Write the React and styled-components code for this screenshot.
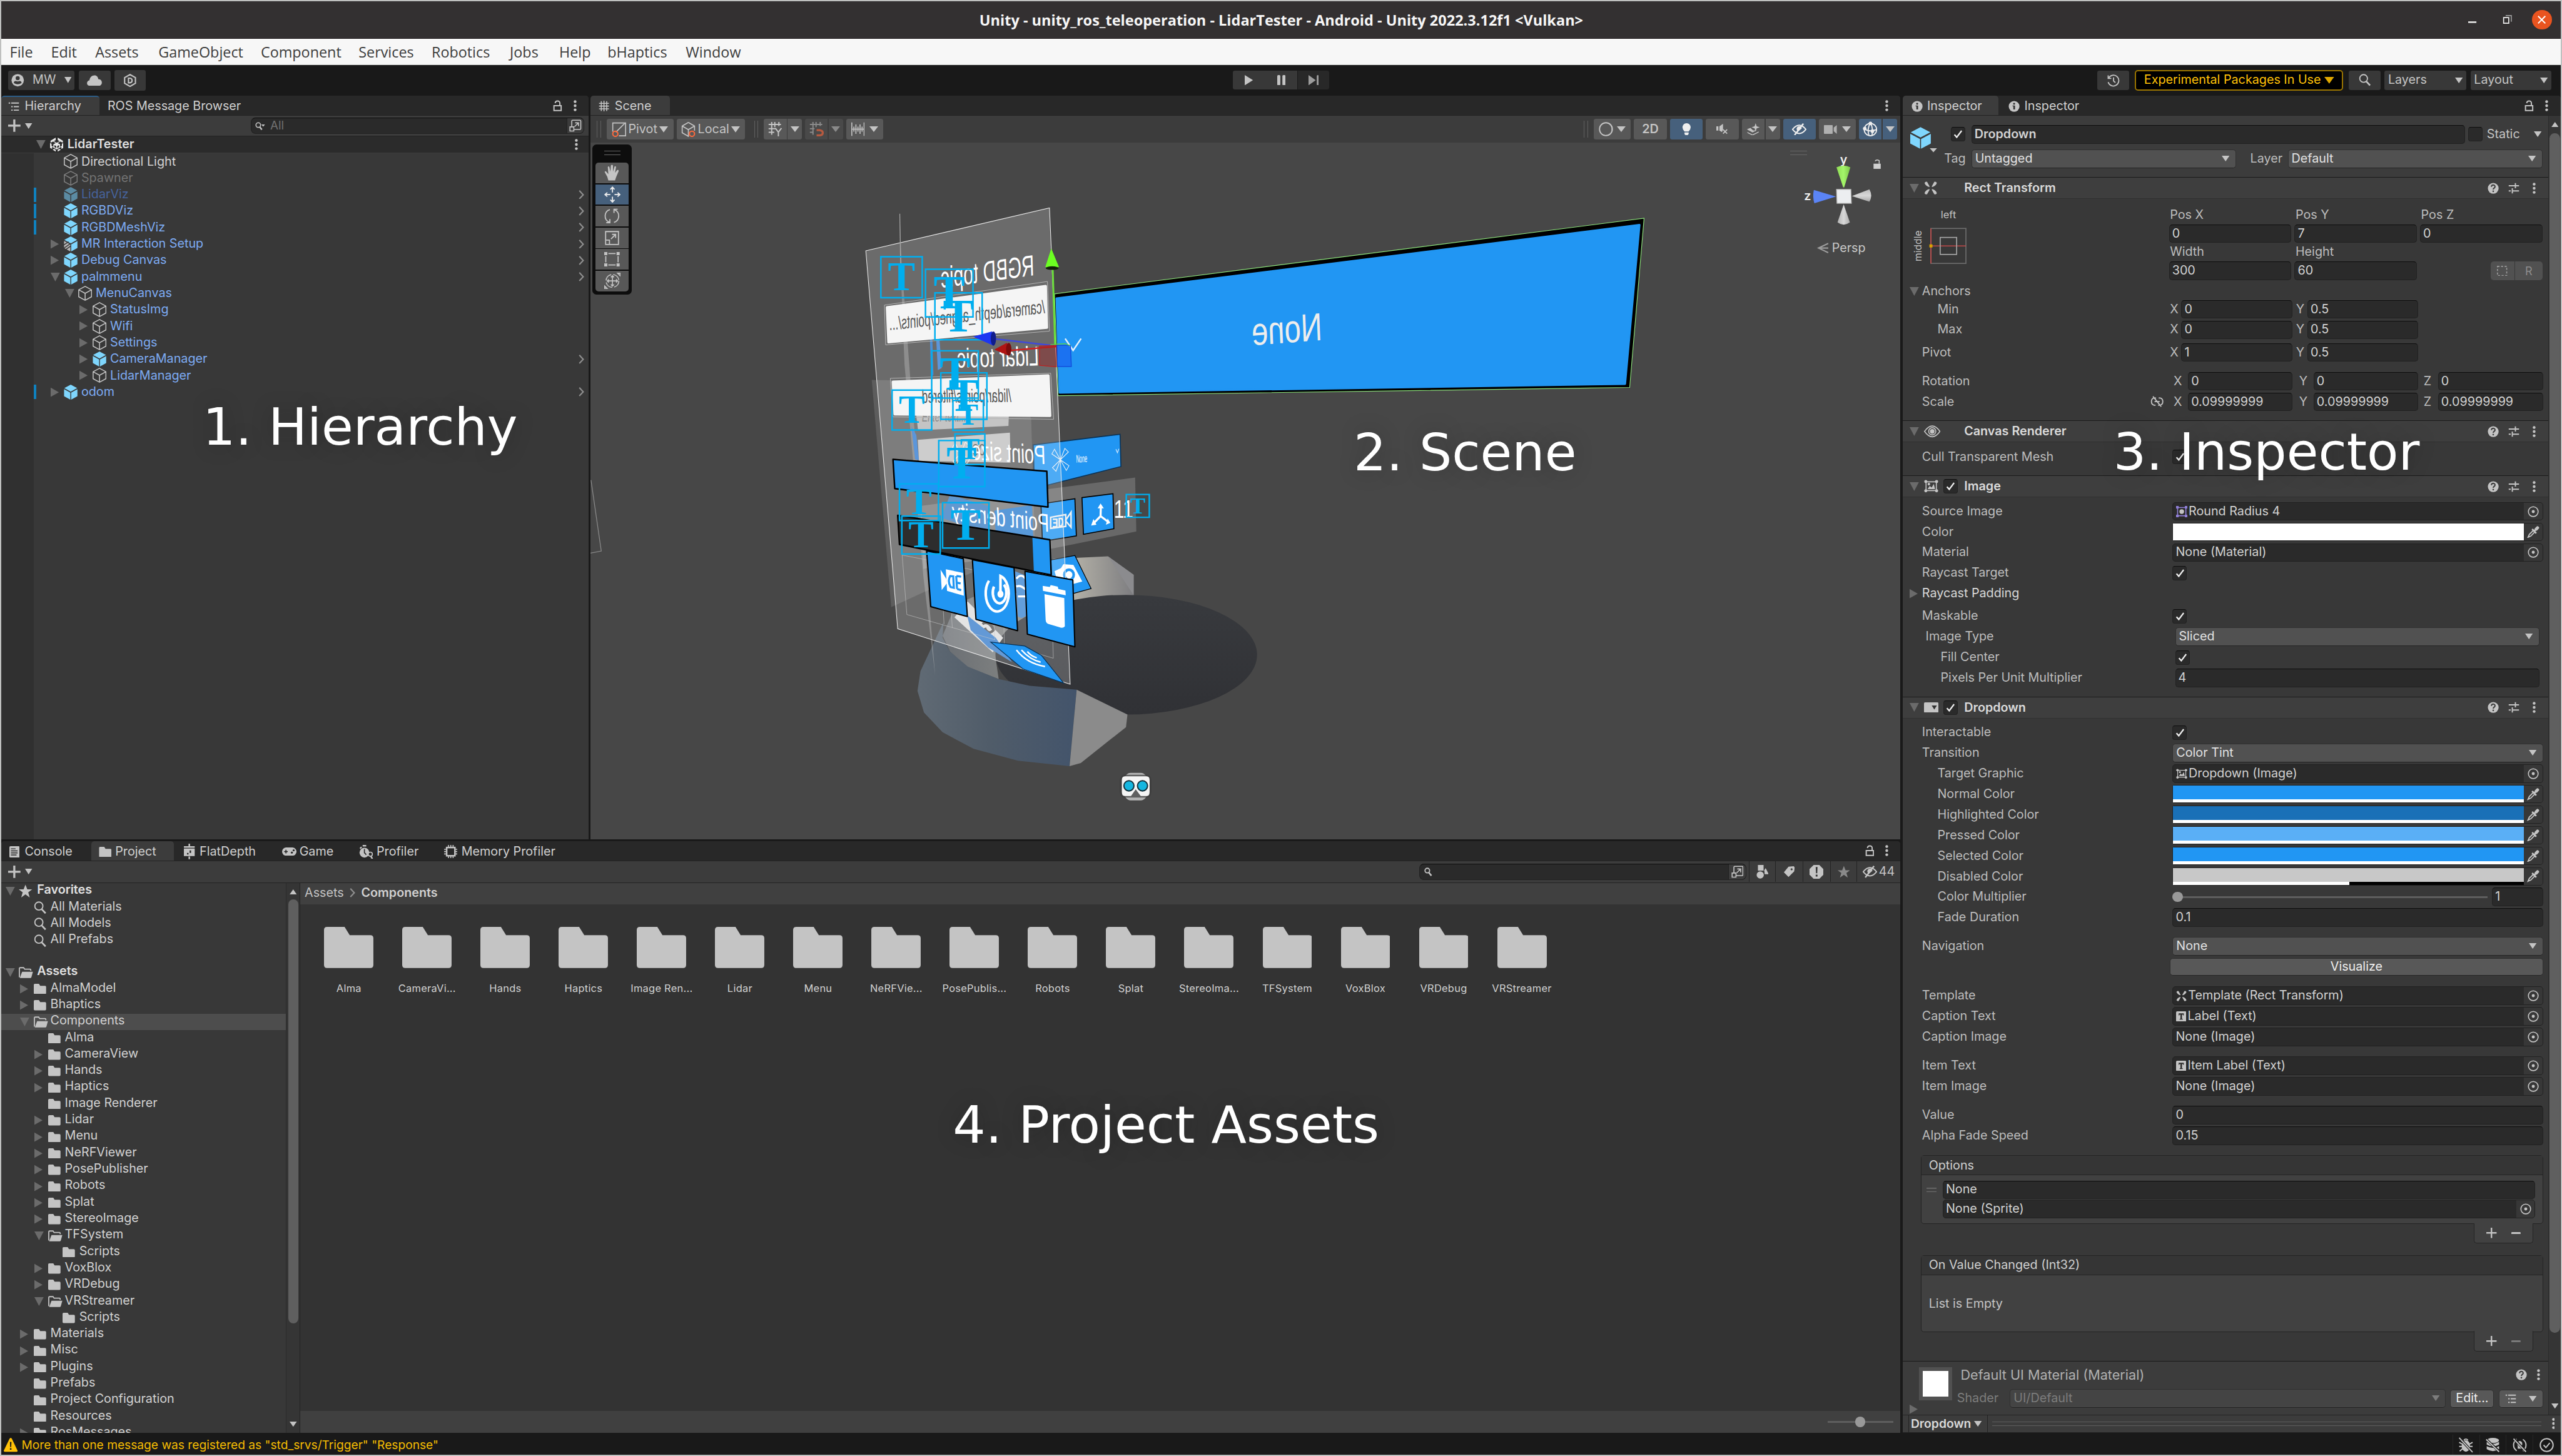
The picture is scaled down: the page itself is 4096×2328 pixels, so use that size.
import React from "react";
import styled, { createGlobalStyle, css } from "styled-components";

const FG = "#c4c4c4";

const GlobalStyle = createGlobalStyle`
  html, body { margin: 0; padding: 0; background: #191919; overflow: hidden; }
  * { box-sizing: border-box; }
`;

/* ---------- window frame ---------- */

const Desktop = styled.div`
  width: 4980px;
  height: 2830px;
  zoom: 0.8225;
  padding: 3px 2px 2px 3px;
  background: #bfc0bf;
  position: relative;
  overflow: hidden;
`;
const Window = styled.div`
  width: 4975px;
  height: 2825px;
  display: flex;
  flex-direction: column;
  overflow: hidden;
  background: #191919;
  font-family: Inter, "Liberation Sans", sans-serif;
  font-size: 24px;
  line-height: 1;
  color: ${FG};
  white-space: nowrap;
`;
const TitleBar = styled.div`
  flex: 0 0 73px;
  background: #333031;
  border-bottom: 2px solid #1f1b1d;
  display: flex;
  align-items: center;
  justify-content: center;
  position: relative;
`;
const Title = styled.div`
  font: bold 28.6px "Open Sans", "Noto Sans", sans-serif;
  color: #f6f6f6;
`;
const WindowButtons = styled.div`
  position: absolute;
  right: 18px;
  top: 0;
  height: 71px;
  display: flex;
  align-items: center;
  gap: 39px;
`;
const MinimizeSlot = styled.div`
  margin-right: 12px;
`;
const CloseButton = styled.div`
  width: 38px;
  height: 38px;
  border-radius: 50%;
  background: #e95420;
  display: grid;
  place-items: center;
`;
const MenuBar = styled.div`
  flex: 0 0 50px;
  background: #f7f7f7;
  border-bottom: 2px solid #dcdedc;
  display: flex;
  align-items: center;
  padding-left: 16px;
`;
const MenuItem = styled.div`
  width: ${(p) => p.$w}px;
  font: 28.4px "Open Sans", "Noto Sans", sans-serif;
  color: #3d3d3d;
`;
const AppToolbar = styled.div`
  flex: 0 0 60px;
  display: flex;
  align-items: center;
  padding: 0 0 0 13px;
`;
const ToolButton = styled.div`
  width: ${(p) => p.$w}px;
  height: ${(p) => p.$h || 38}px;
  margin-left: ${(p) => p.$ml || 0}px;
  padding: 0 ${(p) => p.$px || 0}px;
  background: ${(p) => p.$bg || "#383838"};
  border-radius: ${(p) => p.$r || "4px"};
  display: flex;
  align-items: center;
  justify-content: ${(p) => p.$justify || "center"};
  gap: ${(p) => p.$gap || 0}px;
  font-weight: ${(p) => (p.$bold ? 600 : 400)};
  flex: none;
`;
const ExperimentalButton = styled(ToolButton)`
  border: 3px solid #9a7400;
  background: #000;
  color: #ffc107;
  border-radius: 6px;
`;
const Main = styled.div`
  flex: 0 0 2598px;
  display: flex;
  gap: 4px;
`;
const LeftColumn = styled.div`
  flex: 0 0 3691px;
  display: flex;
  flex-direction: column;
  gap: 4px;
`;
const TopPanels = styled.div`
  flex: 0 0 1444px;
  display: flex;
  gap: 4px;
`;
const Panel = styled.section`
  flex: 0 0 ${(p) => p.$size}px;
  background: #383838;
  border-radius: 6px 6px 0 0;
  overflow: hidden;
  display: flex;
  flex-direction: column;
`;

/* ---------- tabs ---------- */

const TabBar = styled.div`
  flex: 0 0 38px;
  background: #282828;
  border-bottom: 2px solid #232323;
  display: flex;
`;
const Tab = styled.div`
  flex: 0 0 ${(p) => p.$w}px;
  height: 38px;
  padding: 3px 0 0 ${(p) => p.$pl}px;
  display: flex;
  align-items: center;
  gap: ${(p) => p.$gap || 0}px;
  color: #d0d0d0;
  ${(p) => p.$active && css`background: #3c3c3c; border-radius: 6px 6px 0 0;`}
  ${(p) => p.$focus && css`border-top: 3px solid #2c5d87; padding-top: 1px;`}
`;
const TabTools = styled.div`
  margin-left: auto;
  padding-right: ${(p) => p.$pr}px;
  display: flex;
  align-items: center;
  gap: ${(p) => p.$gap || 20}px;
`;
const PanelToolbar = styled.div`
  flex: 0 0 ${(p) => p.$h}px;
  background: #3c3c3c;
  border-bottom: ${(p) => (p.$plain ? "none" : "2px solid #232323")};
  display: flex;
  align-items: center;
  padding-left: ${(p) => p.$pl || 0}px;
`;
const SearchField = styled.div`
  width: ${(p) => p.$w}px;
  height: 32px;
  padding-left: 8px;
  background: #2a2a2a;
  border: 2px solid #212121;
  border-top-color: #0d0d0d;
  border-radius: 9px;
  overflow: hidden;
  display: flex;
  align-items: center;
  gap: 10px;
  color: #707070;
  font-size: 23px;
`;
const SearchOpen = styled.div`
  margin-left: auto;
  width: 33px;
  height: 100%;
  background: #3c3c3c;
  border-left: 2px solid #212121;
  display: grid;
  place-items: center;
`;

/* ---------- trees ---------- */

const HierarchyBody = styled.div`
  flex: 1;
  background: linear-gradient(to right, #303030 63px, #383838 63px);
`;
const SceneRow = styled.div`
  height: 33px;
  display: flex;
  align-items: center;
  background: #2b2b2b;
  border-bottom: 2px solid #3c3c3c;
  padding: 0 21px 0 68px;
  font-weight: 600;
  color: #dedede;
`;
const TreeRow = styled.div`
  height: 32px;
  display: flex;
  align-items: center;
  padding-left: ${(p) => p.$pl}px;
  font-weight: ${(p) => (p.$bold ? 600 : 400)};
  color: ${(p) => p.$color || "#d2d2d2"};
  background: ${(p) => (p.$selected ? "#4d4d4d" : "transparent")};
`;
const Marker = styled.div`
  width: 5px;
  height: 28px;
  margin-left: 63px;
  background: ${(p) => (p.$on ? "#0f81be" : "transparent")};
`;
const Slot = styled.div`
  flex: 0 0 ${(p) => p.$w}px;
  padding-left: ${(p) => p.$pl || 0}px;
  display: flex;
  align-items: center;
`;
const TopSlot = styled(Slot)`
  align-items: flex-start;
  padding-top: ${(p) => p.$pt || 0}px;
`;
const Grow = styled.div`flex: 1;`;
const RowText = styled.div`padding-bottom: ${(p) => p.$pb || 0}px;`;

/* ---------- scene ---------- */

const SceneBody = styled.div`
  flex: 1;
  position: relative;
  background: #474747;
`;
const Grip = styled.div`
  width: 8px;
  height: 32px;
  margin-left: ${(p) => p.$ml}px;
  border: solid #606060;
  border-width: 0 2px;
`;
const HGrip = styled.div`
  width: 32px;
  height: 8px;
  border: solid #666;
  border-width: 2px 0;
`;
const SceneButton = styled(ToolButton)`
  height: 40px;
  background: ${(p) => (p.$on ? "#46607c" : p.$dim ? "#494949" : "#585858")};
`;
const Palette = styled.div`
  position: absolute;
  left: 4px;
  top: 4px;
  width: 76px;
  height: 291px;
  padding-top: 12px;
  background: #0d0d0d;
  border-radius: 8px;
  display: flex;
  flex-direction: column;
  align-items: center;
  gap: 2px;
`;
const PaletteButton = styled.div`
  width: 64px;
  height: 40px;
  margin-top: ${(p) => (p.$first ? 13 : 0)}px;
  background: ${(p) => (p.$on ? "#46607c" : "#585858")};
  border-radius: ${(p) => (p.$first ? "6px 6px 0 0" : p.$last ? "0 0 6px 6px" : 0)};
  display: grid;
  place-items: center;
`;
const OverlayGrip = styled.div`
  position: absolute;
  left: 2332px;
  top: 16px;
`;
const Annotation = styled.div`
  position: absolute;
  left: ${(p) => p.$x}px;
  top: ${(p) => p.$y}px;
  font: 100.3px "DejaVu Sans", sans-serif;
  line-height: 100px;
  white-space: nowrap;
  color: #fff;
  text-shadow: 0 0 40px rgba(20, 20, 20, 0.25);
`;

/* ---------- project ---------- */

const ProjectBody = styled.div`
  flex: 1;
  display: flex;
  min-height: 0;
`;
const ProjectTree = styled.div`
  flex: 0 0 553px;
  overflow: hidden;
`;
const TreeGap = styled.div`
  height: 30px;
`;
const ScrollTrack = styled.div`
  flex: 0 0 ${(p) => p.$w}px;
  background: #353535;
  border: solid #2b2b2b;
  border-width: 0 0 0 1px;
  display: flex;
  flex-direction: column;
  align-items: center;
  padding: 12px 0;
`;
const ScrollThumb = styled.div`
  width: 20px;
  height: ${(p) => p.$h}px;
  margin-top: ${(p) => p.$mt}px;
  border-radius: 10px;
  background: #5f5f5f;
`;
const ProjectContent = styled.div`
  flex: 1;
  border-left: 2px solid #232323;
  background: #333333;
  display: flex;
  flex-direction: column;
`;
const Breadcrumb = styled.div`
  flex: 0 0 42px;
  background: #404040;
  display: flex;
  align-items: center;
  padding: 0 0 3px 8px;
`;
const Crumb = styled.div`
  font-weight: 600;
  color: #d0d0d0;
`;
const FolderGrid = styled.div`
  flex: 1;
  display: flex;
  align-items: flex-start;
  padding: 44px 0 0 18px;
`;
const FolderTile = styled.div`
  flex: 0 0 152px;
  display: flex;
  flex-direction: column;
  align-items: center;
  gap: 29px;
  font-size: 20px;
  letter-spacing: 0.3px;
  color: #d2d2d2;
`;
const ProjectFooter = styled.div`
  flex: 0 0 42px;
  background: #404040;
  display: flex;
  justify-content: flex-end;
  align-items: center;
  padding-right: 14px;
`;
const ZoomTrack = styled.div`
  width: 127px;
  height: 4px;
  background: #5e5e5e;
  display: flex;
  align-items: center;
  padding-left: 53px;
`;
const Knob = styled.div`
  flex: none;
  width: 20px;
  height: 20px;
  border-radius: 50%;
  background: #999;
`;
const FilterCell = styled.div`
  width: ${(p) => p.$w}px;
  height: 40px;
  border-left: 2px solid #232323;
  display: flex;
  align-items: center;
  justify-content: center;
  gap: 3px;
`;
const StatusBar = styled.div`
  flex: 0 0 44px;
  display: flex;
  align-items: center;
  padding: 4px 3px 0 4px;
  color: #f4bc02;
  font-size: 23.3px;
`;
const StatusCell = styled.div`
  width: 52px;
  height: 40px;
  border-left: 2px solid #262626;
  display: grid;
  place-items: center;
`;

/* ---------- inspector ---------- */

const InspectorScroll = styled.div`
  flex: 0 0 2517px;
  display: flex;
`;
const InspectorContent = styled.div`
  flex: 0 0 1255px;
  display: flex;
  flex-direction: column;
  overflow: hidden;
`;
const ObjectHeader = styled.div`
  flex: 0 0 119px;
  background: #3c3c3c;
  display: flex;
  padding: 18px 0 0 15px;
`;
const ObjectLines = styled.div`
  display: flex;
  flex-direction: column;
  gap: 12px;
`;
const HeaderLine = styled.div`
  display: flex;
  align-items: center;
  height: 36px;
  margin-left: ${(p) => p.$ml || 0}px;
`;
const ComponentHeader = styled.div`
  flex: 0 0 43px;
  background: #3e3e3e;
  border-top: 2px solid #1a1a1a;
  border-bottom: 2px solid #303030;
  display: flex;
  align-items: center;
  padding-left: 14px;
`;
const ComponentTitle = styled.div`
  font-weight: 600;
  color: #dadada;
  flex: 1;
  padding-top: 1px;
`;
const HeaderTools = styled.div`
  display: flex;
  align-items: center;
  width: 118px;
`;
const Row = styled.div`
  flex: 0 0 ${(p) => p.$h || 40}px;
  display: flex;
  align-items: center;
`;
const Label = styled.div`
  flex: 0 0 ${(p) => 525 - (p.$short || 0)}px;
  padding: ${(p) => p.$pt || 0}px 0 0 ${(p) => p.$pl || 38}px;
  color: ${(p) => (p.$bright ? "#d8d8d8" : "#bdbdbd")};
  display: flex;
  align-items: center;
`;
const fieldBox = css`
  background: #2a2a2a;
  border: 2px solid #212121;
  border-top-color: #0d0d0d;
  border-radius: 6px;
  color: #d2d2d2;
`;
const Field = styled.div`
  ${fieldBox}
  width: ${(p) => p.$w || 720}px;
  height: 36px;
  padding: 0 0 0 5px;
  margin-left: ${(p) => p.$ml || 0}px;
  display: flex;
  align-items: center;
  flex: none;
  font-weight: ${(p) => (p.$bold ? 600 : 400)};
`;
const ObjectField = styled(Field)`
  border-top-color: #212121;
  gap: 3px;
`;
const Picker = styled.div`
  margin-left: auto;
  width: 36px;
  height: 100%;
  background: #373737;
  border-radius: 0 5px 5px 0;
  display: grid;
  place-items: center;
`;
const Select = styled.div`
  width: ${(p) => p.$w || 720}px;
  height: 36px;
  margin-left: ${(p) => p.$ml || 0}px;
  padding: 0 ${(p) => p.$pr || 11}px 1px 6px;
  background: ${(p) => (p.$dim ? "#444" : "#515151")};
  border: 2px solid #303030;
  border-bottom-color: #242424;
  border-radius: 6px;
  display: flex;
  align-items: center;
  justify-content: space-between;
  color: ${(p) => (p.$dim ? "#7c7c7c" : "#e2e2e2")};
  flex: none;
`;
const CheckBox = styled.div`
  width: 28px;
  height: 28px;
  margin-left: ${(p) => p.$ml || 0}px;
  background: #2a2a2a;
  border: 2px solid #212121;
  border-top-color: #0d0d0d;
  border-radius: 5px;
  display: grid;
  place-items: center;
  flex: none;
`;
const ColorField = styled.div`
  width: 720px;
  height: 35px;
  border: 2px solid #212121;
  border-radius: 3px 6px 6px 3px;
  background: #373737;
  display: flex;
`;
const Swatch = styled.div`
  flex: 0 0 681px;
  display: flex;
  flex-direction: column;
  background: ${(p) => p.$c};
  justify-content: flex-end;
`;
const AlphaBar = styled.div`
  height: 6px;
  background: linear-gradient(to right, #fff ${(p) => p.$a}%, #000 ${(p) => p.$a}%);
`;
const Spacer = styled.div`
  flex: 0 0 ${(p) => p.$h}px;
`;
const RectBlock = styled.div`
  flex: 0 0 144px;
  display: flex;
`;
const AnchorPreview = styled.div`
  flex: 0 0 518px;
  padding: 6px 0 0 16px;
`;
const RectGrid = styled.div`
  display: grid;
  grid-template-columns: repeat(3, 238px);
  grid-auto-rows: 36px;
  column-gap: 6px;
  align-items: center;
`;
const RectLabel = styled.div`
  padding-left: 2px;
  color: #bdbdbd;
`;
const SmallButtons = styled.div`
  justify-self: end;
  display: flex;
  gap: 2px;
`;
const SmallButton = styled.div`
  width: ${(p) => p.$w}px;
  height: 37px;
  background: #515151;
  border-radius: ${(p) => p.$r};
  display: grid;
  place-items: center;
  color: #8c8c8c;
  font-size: 22px;
`;
const Axis = styled.div`
  width: ${(p) => p.$w}px;
  padding-left: ${(p) => p.$pl || 0}px;
  margin-left: ${(p) => p.$ml || 0}px;
  color: ${(p) => (p.$dim ? "#7c7c7c" : "#bdbdbd")};
  flex: none;
`;
const PushButton = styled.div`
  width: ${(p) => p.$w}px;
  height: 35px;
  margin-left: ${(p) => p.$ml || 0}px;
  background: #585858;
  border: 1px solid #303030;
  border-bottom: 2px solid #242424;
  border-radius: 6px;
  display: flex;
  align-items: center;
  justify-content: center;
  gap: 24px;
  color: #eee;
  flex: none;
`;
const SliderTrack = styled.div`
  width: 612px;
  height: 4px;
  background: #5e5e5e;
  display: flex;
  align-items: center;
`;
const ListBox = styled.div`
  flex: 0 0 ${(p) => p.$h}px;
  width: 1209px;
  margin-left: 36px;
  background: #414141;
  border: 2px solid #242424;
  border-radius: 6px;
`;
const ListHeader = styled.div`
  height: 38px;
  background: #353535;
  border-bottom: 2px solid #242424;
  padding: 1px 0 0 14px;
  display: flex;
  align-items: center;
  color: #d0d0d0;
`;
const ListBody = styled.div`
  padding: ${(p) => p.$pad};
  display: flex;
`;
const ListFields = styled.div`
  display: flex;
  flex-direction: column;
  gap: 1px;
`;
const ListFooter = styled.div`
  flex: 0 0 40px;
  width: 115px;
  margin: -2px 0 0 1111px;
  background: #414141;
  border: 2px solid #242424;
  border-top: none;
  border-radius: 0 0 6px 6px;
  display: flex;
  align-items: center;
  justify-content: center;
  gap: 29px;
`;
const MaterialHeader = styled.div`
  flex: 1;
  background: #3c3c3c;
  border-top: 2px solid #1a1a1a;
  display: flex;
  padding: 11px 0 0 14px;
`;
const BottomSlot = styled(Slot)`
  align-items: flex-end;
`;
const Thumb = styled.div`
  width: 64px;
  height: 64px;
  border: 8px solid #515151;
  background: #fff;
`;
const MaterialLines = styled.div`
  flex: 1;
  display: flex;
  flex-direction: column;
  padding-left: 10px;
`;
const MaterialTitle = styled.div`
  flex: 0 0 1086px;
  padding: 2px 0 0 7px;
  font-size: 26.3px;
  color: #b0b0b0;
`;
const PreviewBar = styled.div`
  flex: 1;
  background: #3c3c3c;
  border-top: 2px solid #232323;
  border-bottom: 2px solid #232323;
  display: flex;
  align-items: center;
`;
const PreviewName = styled.div`
  flex: 0 0 154px;
  height: 100%;
  margin-left: 12px;
  border: solid #232323;
  border-width: 0 2px;
  padding-left: 3px;
  display: flex;
  align-items: center;
  gap: 6px;
  font-weight: 600;
  font-size: 23.5px;
  color: #dadada;
`;
const PreviewRule = styled.div`
  flex: 0 0 1068px;
  height: 9px;
  margin-left: 8px;
  border: solid #5e5e5e;
  border-width: 2px 0;
`;

/* ---------- icons ---------- */

const IconSvg = styled.svg`
  display: block;
  flex: none;
`;
const Svg = ({ w, h, vb, children, s, f, sw = 2, ...rest }) => (
  <IconSvg width={w} height={h} viewBox={vb || `0 0 ${w} ${h}`} fill={f || "none"} stroke={s || "none"} strokeWidth={sw} {...rest}>
    {children}
  </IconSvg>
);
const Down = ({ c = FG, w = 16, h = 12 }) => (
  <Svg w={w} h={h} vb="0 0 16 12" f={c} preserveAspectRatio="none"><path d="M0 0H16L8 12Z" /></Svg>
);
const Up = () => (
  <Svg w={14} h={10} f={FG}><path d="M0 10L7 0L14 10Z" /></Svg>
);
const Right = ({ c = "#6b6b6b" }) => (
  <Svg w={16} h={20} f={c}><path d="M0 1V19L16 10Z" /></Svg>
);
const Fold = ({ c = "#6b6b6b" }) => (
  <Svg w={18} h={17} f={c}><path d="M0 0H18L9 17Z" /></Svg>
);
const Kebab = ({ c = FG }) => (
  <Svg w={6} h={22} f={c}><circle cx="3" cy="3" r="2.7" /><circle cx="3" cy="11" r="2.7" /><circle cx="3" cy="19" r="2.7" /></Svg>
);
const Lock = () => (
  <Svg w={18} h={22} s={FG} sw={2.4}><path d="M2 11H16V20.5H2ZM4.5 6C4.5 1 13.5 0 13.5 6V11" /></Svg>
);
const Cube = ({ c = FG, solid, hatch, w = 27 }) => (
  <Svg w={w} h={w * 1.08} vb="0 0 26 28" s={solid ? "none" : c} sw={1.8} strokeLinejoin="round">
    {solid ? (
      <g fill={c}>
        <path d="M13 0L25 6.5L13 13L1 6.5Z" />
        <path d="M0.5 8.5L12.2 15V28L0.5 21.5Z" fill={hatch ? "#b8b8b8" : c} />
        <path d="M25.5 8.5L13.8 15V28L25.5 21.5Z" />
        {hatch && <path d="M0 16L9 10M0 22L13 13M3 25L13 18" stroke="#383838" strokeWidth="1.8" />}
      </g>
    ) : (
      <path d="M13 1L25 7.5V20.5L13 27L1 20.5V7.5ZM1.5 7.8L13 14L24.5 7.8M13 14V27" />
    )}
  </Svg>
);
const UnityLogo = () => (
  <Svg w={26} h={28} vb="0 0 26 28" f="#e8e8e8">
    <path fillRule="evenodd" d="M11 0L1 6V10L6 7.5L11 10.5L6.5 13V18L3 16V12L0 10.5V20L4 22L4 18L13 23L22 18V22L26 20V10.5L23 12V16L19.5 18V13L15 10.5L20 7.5L25 10V6L15 0V5L18.5 7L13 10L7.5 7L11 5ZM8.5 14.5L12 16.5V20.5L8.5 18.5ZM17.5 14.5L14 16.5V20.5L17.5 18.5Z" />
    <path d="M5 23.5L11 27.5V24L13 25L15 24V27.5L21 23.5L18 22L13 24.8L8 22Z" />
  </Svg>
);
const Folder = ({ w = 24, h = 20 }) => (
  <Svg w={w} h={h} vb="0 0 24 20" f={FG}>
    <path d="M2 0H10L12.5 4H22Q24 4 24 6V18Q24 20 22 20H2Q0 20 0 18V2Q0 0 2 0Z" />
  </Svg>
);
const BigFolder = () => (
  <Svg w={96} h={80} f={FG}>
    <path d="M6 0H40L50 16H90Q96 16 96 22V74Q96 80 90 80H6Q0 80 0 74V6Q0 0 6 0Z" />
  </Svg>
);
const FolderOpen = () => (
  <Svg w={28} h={22} vb="0 0 28 22">
    <path d="M1.2 20V3Q1.2 1.5 3 1.5H9.5L11.5 4.5H22Q23.5 4.5 23.5 7.5" stroke={FG} strokeWidth="2.2" fill="none" />
    <path d="M2 21.5L6.5 9.5H27.5L24.5 20.5Q24 21.5 23 21.5Z" fill={FG} />
  </Svg>
);
const Star = ({ w = 26, c = FG }) => (
  <Svg w={w} h={w} vb="0 0 24 24" f={c}>
    <path d="M12 0.5L15.3 9H24L17 14.2L19.6 23.5L12 18L4.4 23.5L7 14.2L0 9H8.7Z" />
  </Svg>
);
const Search = ({ w = 26 }) => (
  <Svg w={w} h={w} vb="0 0 24 24" s={FG} sw={2.2}><circle cx="9.5" cy="9" r="7.5" /><path d="M15 15L22 22.5" strokeWidth="3.2" /></Svg>
);
const OpenWindow = ({ w = 24, c = FG }) => (
  <Svg w={w} h={w} vb="0 0 24 24" s={c} sw={2}>
    <path d="M5 14V3Q5 1.5 6.5 1.5H21Q22.5 1.5 22.5 3V18Q22.5 19.5 21 19.5H10M1.5 14.5H9V22.5H1.5ZM10.5 14L17.5 7M11.5 6.5H18V13" />
  </Svg>
);
const Plus = ({ w = 24, sw = 4 }) => (
  <Svg w={w} h={w} vb="0 0 24 24" s={FG} sw={sw}><path d="M12 0V24M0 12H24" /></Svg>
);
const Tick = ({ c = "#eee" }) => (
  <Svg w={18} h={18} s={c} sw={2.8}><path d="M2 10L6.5 15L16 2.5" /></Svg>
);
const Chevron = ({ c = "#8f8f8f" }) => (
  <Svg w={11} h={18} s={c} sw={2.6}><path d="M1.5 1L9 9L1.5 17" /></Svg>
);
const HierarchyIcon = () => (
  <Svg w={22} h={18} s={FG} sw={2.4}><path d="M1 2H4M6 2H21M6 9H9M11 9H21M6 16H9M11 16H21" /></Svg>
);
const InfoDot = () => (
  <Svg w={22} h={22} f={FG}><circle cx="11" cy="11" r="10.5" /><circle cx="11" cy="5.8" r="2" fill="#333" /><path d="M8 9.5H12.8V17H9.5V11H8Z" fill="#333" /></Svg>
);
const HelpDot = () => (
  <Svg w={22} h={22} f={FG}>
    <circle cx="11" cy="11" r="10.5" />
    <path d="M7.5 8.2C7.5 3.5 14.5 3.5 14.5 8C14.5 10.5 11 10.5 11 13.5" stroke="#3e3e3e" strokeWidth="2.5" fill="none" />
    <circle cx="11" cy="16.8" r="1.6" fill="#3e3e3e" />
  </Svg>
);
const Sliders = () => (
  <Svg w={22} h={22} s={FG} sw={2.4}><path d="M1 6H13M15 6H21M14 1V11M1 16H5M8 16H21M8 11V21" /></Svg>
);
const Target = () => (
  <Svg w={22} h={22} s={FG} sw={2}><circle cx="11" cy="11" r="9.5" /><circle cx="11" cy="11" r="3" fill={FG} stroke="none" /></Svg>
);
const Dropper = () => (
  <Svg w={24} h={24} s={FG} sw={2.2}>
    <path d="M12.5 8.5L4.5 16.5L2 22L7.5 19.5L15.5 11.5" />
    <path d="M11 7L17 13M14 10L20.5 3.5" strokeWidth="3.5" strokeLinecap="round" />
    <path d="M18 6L20.5 3.5" strokeWidth="6" strokeLinecap="round" />
  </Svg>
);
const GridIcon = ({ c = FG, w = 24 }) => (
  <Svg w={w} h={w} vb="0 0 24 24" s={c} sw={2.2}><path d="M6 1V23M12 0V24M18 1V23M1 6H23M1 12H23M1 18H23" /></Svg>
);
const RectIcon = ({ w = 26 }) => (
  <Svg w={w} h={w} vb="0 0 26 26" f={FG}>
    <path d="M1 3Q3 0 6 1L11 10L10 11Q3 9 1 3ZM25 3Q23 0 20 1L15 10L16 11Q23 9 25 3ZM1 23Q3 26 6 25L11 16L10 15Q3 17 1 23ZM25 23Q23 26 20 25L15 16L16 15Q23 17 25 23Z" />
  </Svg>
);
const ImageIcon = ({ w = 28, c = FG }) => (
  <Svg w={w} h={w * 0.9} vb="0 0 28 25" s={c} sw={2}>
    <path d="M4 4H24V21H4Z" />
    <path d="M7 18L11 12L15 15L19 8L21.5 18Z" fill={c} stroke="none" />
    <circle cx="9.5" cy="8.5" r="2.5" fill={c} stroke="none" />
    <g fill={c} stroke="none"><circle cx="3.5" cy="3.5" r="3" /><circle cx="24.5" cy="3.5" r="3" /><circle cx="3.5" cy="21.5" r="3" /><circle cx="24.5" cy="21.5" r="3" /></g>
  </Svg>
);
const SpriteIcon = () => (
  <Svg w={22} h={22} s="#8f7fd6" sw={2}>
    <path d="M3 3H19V19H3Z" /><circle cx="11" cy="11" r="4.5" fill={FG} stroke="none" />
    <g fill="#8f7fd6" stroke="none"><rect width="5" height="5" /><rect x="17" width="5" height="5" /><rect y="17" width="5" height="5" /><rect x="17" y="17" width="5" height="5" /></g>
  </Svg>
);
const TextIcon = () => (
  <Svg w={20} h={20} f={FG}><rect width="20" height="20" rx="2" /><path d="M5 4H15V8H13.5V6.5H11.5V14.5H13V16H7V14.5H8.5V6.5H6.5V8H5Z" fill="#2a2a2a" /></Svg>
);
const EyeIcon = () => (
  <Svg w={32} h={26} s={FG} sw={2}><path d="M1 13Q16 -8 31 13Q16 34 1 13Z" /><circle cx="16" cy="13" r="7" /><circle cx="16" cy="13" r="3.5" fill={FG} /></Svg>
);
const EyeOff = ({ c = "#eee" }) => (
  <Svg w={28} h={24} s={c} sw={2.4}><path d="M1 12Q14 -4 27 12Q14 28 1 12Z" /><path d="M9 12A5 5 0 0 1 19 10L11 17Z" fill={c} stroke="none" /><path d="M22 1L5 23" strokeWidth="3" /></Svg>
);
const UserIcon = () => (
  <Svg w={25} h={25} f={FG}><circle cx="12.5" cy="12.5" r="12" /><circle cx="12.5" cy="8.5" r="4" fill="#383838" /><path d="M5 18Q5 14 9 14Q12.5 16 16 14Q20 14 20 18Q12.5 23 5 18Z" fill="#383838" /></Svg>
);
const CloudIcon = () => (
  <Svg w={29} h={21} f={FG}><path d="M5 21C-2 20-1 11 5 10C6-1 21-3 22 8C31 8 31 20 24 21Z" /></Svg>
);
const HexIcon = () => (
  <Svg w={24} h={26} s={FG} sw={2.6}><path d="M12 1.5L22.5 7.5V18.5L12 24.5L1.5 18.5V7.5ZM9 8.5H12Q16 9 16 13Q16 17 12 17.5H9Z" /></Svg>
);
const HistoryIcon = () => (
  <Svg w={26} h={26} s={FG} sw={2.2}><path d="M4 8A10.5 10.5 0 1 1 3 16M3 3V9H9M13.5 7V14L17 17" /></Svg>
);
const ConsoleIcon = () => (
  <Svg w={20} h={22} f={FG}><rect width="20" height="22" rx="2" /><path d="M3 5H12M3 9H16M3 13H16M3 17H14" stroke="#282828" strokeWidth="1.8" /></Svg>
);
const DepthIcon = () => (
  <Svg w={21} h={30} f={FG}><path d="M0 5H21V8H0ZM0 9.5H21V24H0Z" /><path d="M9 0H12V5H9ZM9 25H12V30H9Z" /><path d="M6 18H9V21H6ZM11 13H14V18H11Z" fill="#282828" /></Svg>
);
const GameIcon = () => (
  <Svg w={28} h={16} f={FG}><rect width="28" height="16" rx="8" /><path d="M4 8H11M7.5 4.5V11.5" stroke="#282828" strokeWidth="2" /><circle cx="19" cy="10" r="2" fill="#282828" /><circle cx="22.5" cy="5.5" r="2" fill="#282828" /></Svg>
);
const ProfilerIcon = () => (
  <Svg w={28} h={27} f={FG}><circle cx="10.5" cy="15" r="9.5" /><path d="M7 0H14V3H7ZM1 6L4 3L6 5L3 8Z" /><path d="M10.5 8V15L14 19" stroke="#282828" strokeWidth="2" fill="none" /><circle cx="22" cy="18" r="4" stroke={FG} strokeWidth="2" fill="#282828" /><path d="M23 22L26 27" stroke={FG} strokeWidth="3" /></Svg>
);
const ChipIcon = () => (
  <Svg w={26} h={26} s={FG} sw={3}><rect x="5" y="5" width="16" height="16" /><path d="M8.5 0V5M13 0V5M17.5 0V5M8.5 21V26M13 21V26M17.5 21V26M0 8.5H5M0 13H5M0 17.5H5M21 8.5H26M21 13H26M21 17.5H26" strokeWidth="2" /></Svg>
);

/* ---------- data ---------- */

const MENU = [
  ["File", 80], ["Edit", 86], ["Assets", 123], ["GameObject", 199], ["Component", 190], ["Services", 142],
  ["Robotics", 152], ["Jobs", 96], ["Help", 94], ["bHaptics", 152], ["Window", 130],
];

const BLUE = "#7dabf3";
const HIERARCHY = [
  { name: "Directional Light", level: 1, color: "#d2d2d2" },
  { name: "Spawner", level: 1, color: "#737373", icon: "#7d7d7d" },
  { name: "LidarViz", level: 1, solid: true, mark: true, color: "#46639c", icon: "#5b8ba3", chev: true },
  { name: "RGBDViz", level: 1, solid: true, mark: true, chev: true },
  { name: "RGBDMeshViz", level: 1, solid: true, mark: true, chev: true },
  { name: "MR Interaction Setup", level: 1, solid: true, hatch: true, arrow: "r", chev: true },
  { name: "Debug Canvas", level: 1, solid: true, arrow: "r", chev: true },
  { name: "palmmenu", level: 1, solid: true, arrow: "d", chev: true },
  { name: "MenuCanvas", level: 2, arrow: "d" },
  { name: "StatusImg", level: 3, arrow: "r" },
  { name: "Wifi", level: 3, arrow: "r" },
  { name: "Settings", level: 3, arrow: "r" },
  { name: "CameraManager", level: 3, solid: true, arrow: "r", chev: true },
  { name: "LidarManager", level: 3, arrow: "r" },
  { name: "odom", level: 1, solid: true, mark: true, arrow: "r", chev: true },
];

const ASSETS = [
  ["AlmaModel", 1, "r"], ["Bhaptics", 1, "r"], ["Components", 1, "d"], ["Alma", 2], ["CameraView", 2, "r"],
  ["Hands", 2, "r"], ["Haptics", 2, "r"], ["Image Renderer", 2], ["Lidar", 2, "r"], ["Menu", 2, "r"],
  ["NeRFViewer", 2, "r"], ["PosePublisher", 2, "r"], ["Robots", 2, "r"], ["Splat", 2, "r"], ["StereoImage", 2, "r"],
  ["TFSystem", 2, "d"], ["Scripts", 3], ["VoxBlox", 2, "r"], ["VRDebug", 2, "r"], ["VRStreamer", 2, "d"],
  ["Scripts", 3], ["Materials", 1, "r"], ["Misc", 1, "r"], ["Plugins", 1, "r"], ["Prefabs", 1],
  ["Project Configuration", 1], ["Resources", 1], ["RosMessages", 1, "r"],
];

const FOLDERS = [
  "Alma", "CameraVi...", "Hands", "Haptics", "Image Ren...", "Lidar", "Menu", "NeRFVie...", "PosePublis...",
  "Robots", "Splat", "StereoIma...", "TFSystem", "VoxBlox", "VRDebug", "VRStreamer",
];

/* ---------- hierarchy ---------- */

const Arrow = ({ kind, c }) => (kind === "r" ? <Right c={c} /> : kind === "d" ? <Fold c={c} /> : null);

function Hierarchy() {
  return (
    <Panel $size={1141}>
      <TabBar>
        <Tab $w={190} $pl={13} $gap={10} $active $focus><HierarchyIcon />Hierarchy</Tab>
        <Tab $w={300} $pl={16}>ROS Message Browser</Tab>
        <TabTools $pr={23} $gap={22}><Lock /><Kebab /></TabTools>
      </TabBar>
      <PanelToolbar $h={40} $pl={13}>
        <Plus />
        <Slot $w={447} $pl={9}><Down w={14} h={11} /></Slot>
        <SearchField $w={649}>
          <Svg w={19} h={16} s={FG} sw={2}><circle cx="6" cy="6" r="4.5" /><path d="M9 10L13 15" strokeWidth="3" /><path d="M12 5H19L15.5 9Z" fill={FG} stroke="none" /></Svg>
          All
          <SearchOpen><OpenWindow /></SearchOpen>
        </SearchField>
      </PanelToolbar>
      <HierarchyBody>
        <SceneRow>
          <Slot $w={26}><Fold /></Slot>
          <Slot $w={34}><UnityLogo /></Slot>
          LidarTester
          <Grow />
          <Kebab />
        </SceneRow>
        {HIERARCHY.map((n) => (
          <TreeRow key={n.name} $pl={0} $color={n.color || BLUE}>
            <Marker $on={n.mark} />
            <Slot $w={28 * n.level} />
            <Slot $w={25}><Arrow kind={n.arrow} /></Slot>
            <Slot $w={34}>
              <Cube solid={n.solid} hatch={n.hatch} c={n.icon || (n.solid ? "#7fd6fd" : FG)} />
            </Slot>
            {n.name}
            <Grow />
            <Slot $w={19}>{n.chev && <Chevron />}</Slot>
          </TreeRow>
        ))}
      </HierarchyBody>
    </Panel>
  );
}

/* ---------- scene drawing ---------- */

const poly = (pts) => pts.map((p) => p.join(",")).join(" ");
const P = ({ pts, ...r }) => <polygon points={poly(pts)} vectorEffect="non-scaling-stroke" {...r} />;

const Mirrored = ({ x, y, x2, y2, size, fill = "#fff", opacity, children }) => {
  const len = x - x2;
  return (
    <text
      transform={`matrix(-1 ${(y2 - y) / len} 0.04 1 ${x} ${y})`}
      textLength={len}
      lengthAdjust="spacingAndGlyphs"
      fontFamily='"Liberation Sans", sans-serif'
      fontSize={size}
      fill={fill}
      opacity={opacity}
    >
      {children}
    </text>
  );
};

const TGizmo = ({ x, y, x2, y2 }) => {
  const w = x2 - x;
  const h = y2 - y;
  return (
    <g>
      <rect x={x} y={y} width={w} height={h} fill="none" stroke="#00aeef" strokeWidth="3" vectorEffect="non-scaling-stroke" />
      <text
        x={x + w * 0.17}
        y={y + h * 0.82}
        textLength={w * 0.66}
        lengthAdjust="spacingAndGlyphs"
        fontFamily='"Liberation Serif", serif'
        fontWeight="bold"
        fontSize={h}
        fill="#00aeef"
      >
        T
      </text>
    </g>
  );
};

const GIZMOS = [
  [196, 167, 336, 271], [347, 199, 508, 320], [379, 259, 539, 378], [368, 406, 526, 526], [399, 462, 555, 580],
  [440, 532, 543, 608], [234, 506, 368, 607], [447, 617, 548, 695], [392, 634, 548, 751], [259, 744, 391, 837],
  [405, 792, 562, 907], [267, 826, 397, 922], [1027, 771, 1105, 829],
];

const Pinwheel = ({ x, y }) => (
  <g transform={`translate(${x} ${y})`} fill="none" stroke="#f4f4f4" strokeWidth="1.3">
    {[0, 90, 180, 270].map((a) => (
      <path key={a} d="M0 0L15 -29L27 -20Z" transform={`rotate(${a})`} vectorEffect="non-scaling-stroke" />
    ))}
  </g>
);

const Drawing = styled.svg`
  display: block;
`;

function SceneDrawing() {
  return (
    <Drawing width="2546" height="1354" viewBox="1148 276 2546 1354">
      <defs>
        <linearGradient id="dome" x1="0" x2="1"><stop offset="0" stopColor="#606a74" /><stop offset="0.45" stopColor="#505c69" /><stop offset="1" stopColor="#43546b" /></linearGradient>
        <linearGradient id="disc" x1="0" y1="0" x2="0" y2="1"><stop offset="0" stopColor="#383a3e" /><stop offset="1" stopColor="#303135" /></linearGradient>
        <linearGradient id="rim" x1="0" x2="1"><stop offset="0" stopColor="#e9e4d2" /><stop offset="0.5" stopColor="#b9b6ab" /><stop offset="1" stopColor="#7d7d80" /></linearGradient>
        <linearGradient id="inner" x1="0" x2="1"><stop offset="0" stopColor="#6a6e73" /><stop offset="1" stopColor="#96968f" /></linearGradient>
        <linearGradient id="gcone" x1="0" x2="1"><stop offset="0" stopColor="#8fdc55" /><stop offset="0.5" stopColor="#a4f56a" /><stop offset="1" stopColor="#7cc749" /></linearGradient>
        <linearGradient id="scone" x1="0" x2="1"><stop offset="0" stopColor="#b4b4b4" /><stop offset="0.5" stopColor="#d8d8d8" /><stop offset="1" stopColor="#adadad" /></linearGradient>
        <linearGradient id="vcone" x1="0" y1="0" x2="0" y2="1"><stop offset="0" stopColor="#bcbcbc" /><stop offset="0.5" stopColor="#d8d8d8" /><stop offset="1" stopColor="#a5a5a5" /></linearGradient>
      </defs>
      <path d="M1149 932L1169 1070L1148 1074" fill="none" stroke="#8a8a8a" strokeWidth="1.5" />

      <g transform="translate(1600 370) scale(0.574 0.7653)">
        {/* pedestal */}
        <P pts={[[780, 935], [965, 928], [1052, 975], [1052, 1030], [840, 1060], [700, 1110], [600, 1060]]} fill="url(#rim)" />
        <P pts={[[965, 928], [1052, 975], [1052, 1027]]} fill="#8b8b8e" />
        <P pts={[[450, 1050], [560, 1015], [860, 1045], [700, 1090], [610, 1140], [585, 1190], [595, 1240], [490, 1210], [430, 1170], [405, 1130]]} fill="url(#inner)" />
        <ellipse cx="1027" cy="1178" rx="443" ry="152" fill="url(#disc)" />
        <P pts={[[408, 1095], [405, 1135], [430, 1170], [490, 1208], [595, 1240], [700, 1257], [859, 1267], [835, 1461], [660, 1447], [510, 1417], [405, 1375], [342, 1325], [320, 1270], [330, 1220]]} fill="url(#dome)" />
        <P pts={[[859, 1267], [1031, 1330], [1026, 1362], [873, 1453], [835, 1461]]} fill="#8b8b8b" />

        {/* panel behind */}
        <P pts={[[165, 480], [640, 486], [705, 578], [718, 905], [345, 1018], [231, 1057]]} fill="#fff" opacity="0.12" />
        <P pts={[[712, 645], [1006, 618], [1009, 700], [762, 747], [716, 750]]} fill="#2196f3" stroke="#0b3356" strokeWidth="2" />
        <P pts={[[330, 800], [1057, 728], [1061, 865], [780, 908], [340, 960]]} fill="#fff" opacity="0.18" />
        <P pts={[[430, 772], [560, 800], [560, 870], [400, 830]]} fill="#3b7fc4" />
        <P pts={[[580, 812], [708, 798], [712, 880], [585, 870]]} fill="#2f80d0" />
        <P pts={[[738, 795], [853, 782], [858, 876], [743, 890]]} fill="#2196f3" stroke="#000" strokeWidth="2" />
        <P pts={[[877, 779], [982, 769], [985, 858], [882, 872]]} fill="#2196f3" stroke="#000" strokeWidth="2" />
        <path d="M940 826L941 800M940 826L914 846M940 826L968 842" stroke="#fff" strokeWidth="4" vectorEffect="non-scaling-stroke" />
        <path d="M940 794L951 806H930ZM908 850L916 833L926 848ZM973 843L958 848L964 832Z" fill="#fff" />
        <text x="985" y="831" fontFamily='"Liberation Sans", sans-serif' fontSize="64" textLength="66" lengthAdjust="spacingAndGlyphs" fill="#fff">11</text>
        <text x="858" y="690" transform="rotate(-2 858 690)" fontFamily='"Liberation Sans", sans-serif' fontSize="28" textLength="37" lengthAdjust="spacingAndGlyphs" fill="#fff">None</text>
        <path d="M992 656L997 665L1002 655" fill="none" stroke="#cfe6fb" strokeWidth="1.5" vectorEffect="non-scaling-stroke" />
        <path d="M771 829L822 822V852L771 857Z" fill="none" stroke="#f0f0f0" strokeWidth="3" vectorEffect="non-scaling-stroke" />
        <path d="M778 834H792V853H778M780 843H792M800 832H808Q816 840 808 851H800ZM822 836L840 816V854L824 840Z" fill="none" stroke="#f0f0f0" strokeWidth="3" vectorEffect="non-scaling-stroke" />
        <P pts={[[740, 942], [853, 926], [908, 1010], [850, 1022], [790, 1030]]} fill="#2196f3" stroke="#000" strokeWidth="1.5" />
        <P pts={[[784, 966], [806, 958], [814, 948], [848, 950], [878, 992], [800, 1008]]} fill="#fff" />
        <ellipse cx="833" cy="975" rx="16" ry="13" fill="none" stroke="#2196f3" strokeWidth="5" vectorEffect="non-scaling-stroke" />
        <path d="M650 966L690 978V1078Q672 1090 660 1080Z" fill="#3c86d2" />
        <path d="M655 985Q670 970 686 985M655 1005Q668 1000 686 1012M660 1030H686" stroke="#fff" strokeWidth="4" fill="none" vectorEffect="non-scaling-stroke" />
        <P pts={[[445, 1083], [490, 1043], [610, 1135], [575, 1172]]} fill="#dedede" />
        <path d="M540 1100Q560 1090 578 1115Q560 1130 548 1110" fill="none" stroke="#555" strokeWidth="5" vectorEffect="non-scaling-stroke" />
        <P pts={[[488, 1078], [585, 1135], [640, 1197], [560, 1160], [500, 1115]]} fill="#3c80cc" />

        {/* menu canvas */}
        <P pts={[[145, 152], [767, 43], [837, 1253], [253, 1112]]} fill="#fff" fillOpacity="0.2" stroke="#e8e8e8" strokeWidth="1.3" />
        <P pts={[[260, 58], [266, 180], [300, 520], [352, 975], [380, 1232], [340, 980], [276, 440], [262, 180]]} fill="#cfcfcf" opacity="0.35" />
        <path d="M260 58L264 240" stroke="#a5a5a5" strokeWidth="1.5" fill="none" vectorEffect="non-scaling-stroke" />
        <path d="M268 925L398 944L410 1100M268 925L284 1076L582 1140L570 972L424 950L438 1110M608 950L614 1150L780 1187L772 990" stroke="#c8c8c8" strokeOpacity="0.6" strokeWidth="1.2" fill="none" vectorEffect="non-scaling-stroke" />
        <P pts={[[362, 372], [370, 372], [374, 466], [366, 478]]} fill="#4a8fd8" />
        <P pts={[[383, 372], [394, 372], [402, 450], [389, 455]]} fill="#5c96da" />
        <P pts={[[299, 598], [316, 620], [325, 684], [312, 682]]} fill="#5c96da" />
        <P pts={[[314, 560], [630, 560], [628, 597], [322, 608]]} fill="#c4c4c4" />
        <text x="335" y="585" fontFamily='"Liberation Sans", sans-serif' fontStyle="italic" fontSize="36" textLength="150" lengthAdjust="spacingAndGlyphs" fill="#8b8b8b">Enter text...</text>
        <P pts={[[321, 632], [633, 614], [635, 690], [325, 686]]} fill="#cdcdcd" />
        <text x="505" y="672" fontFamily='"Liberation Sans", sans-serif' fontSize="40" fill="#777">00</text>

        <P pts={[[208, 290], [760, 230], [767, 356], [212, 391]]} fill="none" stroke="#b5b5b5" strokeWidth="1.2" />
        <P pts={[[217, 296], [754, 242], [758, 347], [222, 384]]} fill="#f5f5f5" stroke="#f5f5f5" strokeWidth="5" strokeLinejoin="round" />
        <P pts={[[228, 476], [771, 463], [781, 580], [237, 574]]} fill="none" stroke="#b5b5b5" strokeWidth="1.2" />
        <P pts={[[237, 485], [763, 469], [769, 571], [243, 567]]} fill="#f5f5f5" stroke="#f5f5f5" strokeWidth="5" strokeLinejoin="round" />
        <Mirrored x={716} y={214} x2={400} y2={246} size={74}>RGBD topic</Mirrored>
        <Mirrored x={752} y={310} x2={225} y2={354} size={47} fill="#555">/camera/depth_aligned/points/...</Mirrored>
        <Mirrored x={732} y={443} x2={455} y2={449} size={69}>Lidar topic</Mirrored>
        <Mirrored x={638} y={536} x2={335} y2={538} size={47} fill="#555">/lidar/points/filtered</Mirrored>
        <Mirrored x={754} y={694} x2={504} y2={682} size={67}>Point size</Mirrored>
        <P pts={[[237, 682], [758, 712], [762, 803], [243, 756]]} fill="#2196f3" stroke="#000" strokeWidth="3" strokeLinejoin="round" />
        <Mirrored x={766} y={866} x2={437} y2={836} size={64}>Point density</Mirrored>
        <P pts={[[253, 824], [768, 886], [773, 975], [259, 898]]} fill="#2d2d2d" stroke="#000" strokeWidth="3" strokeLinejoin="round" />
        <P pts={[[709, 881], [766, 888], [770, 973], [714, 965]]} fill="#2196f3" />
        <P pts={[[351, 914], [475, 934], [489, 1081], [365, 1056]]} fill="#2196f3" stroke="#000" strokeWidth="2.5" strokeLinejoin="round" />
        <P pts={[[506, 937], [647, 957], [659, 1117], [518, 1088]]} fill="#2196f3" stroke="#000" strokeWidth="2.5" strokeLinejoin="round" />
        <P pts={[[684, 966], [846, 988], [853, 1158], [692, 1126]]} fill="#2196f3" stroke="#000" strokeWidth="2.5" strokeLinejoin="round" />
        <P pts={[[398, 962], [417, 985], [420, 996], [402, 1014]]} fill="#fff" />
        <P pts={[[416, 961], [474, 970], [477, 1028], [420, 1016]]} fill="#fff" />
        <path d="M468 980L452 978M468 1014L454 1011M466 997L454 995M451 978L454 1011M441 979L431 978Q421 990 432 1006L443 1008Z" fill="none" stroke="#2196f3" strokeWidth="4" vectorEffect="non-scaling-stroke" />
        <g fill="none" stroke="#fff" strokeWidth="5">
          <path d="M562 990A39 46 0 1 0 601 978V1022" vectorEffect="non-scaling-stroke" />
          <path d="M579 1005A23 27 0 1 0 613 1000" vectorEffect="non-scaling-stroke" />
          <circle cx="601" cy="1024" r="6" fill="#fff" vectorEffect="non-scaling-stroke" />
        </g>
        <P pts={[[744, 1003], [768, 1006], [771, 1001], [795, 1005], [797, 1011], [821, 1015], [822, 1027], [745, 1016]]} fill="#fff" />
        <path d="M750 1024L817 1034L819 1106Q812 1112 800 1108L764 1100Q755 1098 754 1090Z" fill="#fff" />
        <P pts={[[568, 1146], [683, 1156], [740, 1180], [815, 1250], [677, 1214]]} fill="#2196f3" stroke="#06335a" strokeWidth="1.5" />
        <path d="M655 1166Q690 1200 752 1208M672 1166Q700 1190 737 1197M692 1170Q705 1182 724 1186" fill="none" stroke="#fff" strokeWidth="3" vectorEffect="non-scaling-stroke" />
        <Pinwheel x={467} y={667} />
        <Pinwheel x={804} y={683} />
        {GIZMOS.map(([x, y, x2, y2]) => (
          <TGizmo key={`${x}-${y}`} x={x} y={y} x2={x2} y2={y2} />
        ))}
      </g>

      {/* large dropdown */}
      <P pts={[[2050, 570], [3196, 423], [3168, 752], [2057, 768]]} fill="#000" stroke="#8be07a" strokeWidth="1.4" />
      <P pts={[[2054, 579], [3187, 436], [3159, 745], [2060, 762]]} fill="#2196f3" stroke="#2196f3" strokeWidth="4" strokeLinejoin="round" />
      <Mirrored x={2571} y={660} x2={2434} y2={670} size={76} fill="#ededed">None</Mirrored>

      <g transform="translate(1600 370) scale(0.574 0.7653)">
        <path d="M820 375L847 405L874 375" fill="none" stroke="#e4f1fd" strokeWidth="3" vectorEffect="non-scaling-stroke" />
        <path d="M778 200L786 392" stroke="#6be03a" strokeWidth="3.5" vectorEffect="non-scaling-stroke" />
        <path d="M584 376L792 394" stroke="#3f49d8" strokeWidth="3" vectorEffect="non-scaling-stroke" />
        <path d="M636 405L792 395" stroke="#d11f1f" strokeWidth="3" vectorEffect="non-scaling-stroke" />
        <path d="M753 193L773 146L799 193Q776 204 753 193Z" fill="#6cff22" />
        <ellipse cx="776" cy="196" rx="22" ry="4.500" fill="#12200a" />
        <path d="M508 370L572 357Q590 374 578 393Z" fill="#1c36f2" />
        <ellipse cx="577" cy="375" rx="9" ry="18" fill="#101c8c" />
        <path d="M580 403L622 386Q642 402 630 419Z" fill="#b01414" />
        <ellipse cx="629" cy="402" rx="9" ry="16" fill="#7c0c0c" />
        <P pts={[[733, 394], [790, 392], [790, 447], [733, 443]]} fill="#9c1b1b" fillOpacity="0.4" stroke="#b22" strokeWidth="1.5" />
        <P pts={[[792, 392], [838, 392], [841, 446], [794, 446]]} fill="#1a62f0" fillOpacity="0.7" stroke="#1246d8" strokeWidth="1.5" />
        <path d="M770 390L820 388L838 393" fill="none" stroke="#5fd837" strokeWidth="1.5" vectorEffect="non-scaling-stroke" />

        {/* headset */}
        <rect x="1018" y="1478" width="82" height="70" rx="24" fill="#b5b5b5" />
        <rect x="1005" y="1483" width="107" height="58" rx="14" fill="#3c3c3c" opacity="0.7" />
        <path d="M1022 1487H1096Q1106 1487 1106 1497V1527Q1106 1537 1096 1537H1076L1059 1520L1043 1537H1022Q1012 1537 1012 1527V1497Q1012 1487 1022 1487Z" fill="#f5f5f5" />
        <ellipse cx="1036" cy="1511" rx="17" ry="13" fill="#14b6e0" stroke="#15323d" strokeWidth="2.5" vectorEffect="non-scaling-stroke" />
        <ellipse cx="1082" cy="1511" rx="17" ry="13" fill="#14b6e0" stroke="#15323d" strokeWidth="2.5" vectorEffect="non-scaling-stroke" />
      </g>

      {/* orientation gizmo */}
      <text x="3577" y="317" fontFamily="Inter, sans-serif" fontWeight="600" fontSize="24" fill="#f0f0f0">y</text>
      <text x="3507" y="388" fontFamily="Inter, sans-serif" fontWeight="600" fontSize="24" fill="#f0f0f0">z</text>
      <path d="M3570 324Q3584 318 3597 324L3585 363H3583Z" fill="url(#gcone)" />
      <path d="M3526 368Q3523 381 3527 394L3569 381Z" fill="#5b84f5" />
      <path d="M3600 380L3634 367Q3641 379 3634 391Z" fill="url(#vcone)" />
      <path d="M3584 396L3572 431Q3584 440 3596 431Z" fill="url(#scone)" />
      <path d="M3570 367H3598L3599 394H3571Z" fill="#eceef0" stroke="#b8b8b8" strokeWidth="1.5" />
      <path d="M3642 317H3656V327H3642Z" fill="#d0d0d0" />
      <path d="M3645 312Q3648 308 3653 311V317" fill="none" stroke="#d0d0d0" strokeWidth="1.8" />
      <path d="M3554 472L3535 481L3554 490M3537 481H3554" fill="none" stroke="#9c9c9c" strokeWidth="2.5" />
      <text x="3561" y="489" fontFamily="Inter, sans-serif" fontSize="24" fill="#c8c8c8">Persp</text>
    </Drawing>
  );
}

const PALETTE = [
  <Svg w={30} h={32} f={FG} key="hand"><path d="M8 31L6 24L1 15Q1 12 4 14L8 19L7 5Q8 2 10 5L12 14L13 2Q15 -1 17 2V14L20 4Q22 2 23 5L21 16L25 11Q28 9 28 13L23 25L21 31Z" /></Svg>,
  <Svg w={32} h={32} s="#eee" sw={2.2} key="move"><path d="M16 2V12M16 20V30M2 16H12M20 16H30M12 6L16 1.5L20 6M12 26L16 30.5L20 26M6 12L1.5 16L6 20M26 12L30.5 16L26 20" /></Svg>,
  <Svg w={30} h={30} s={FG} sw={2.2} key="rot"><path d="M10 27A13 13 0 0 1 11 2.5M20 3A13 13 0 0 1 19 27.5M4 28H11V21M26 2H19V9" /></Svg>,
  <Svg w={28} h={28} s={FG} sw={2.2} key="scale"><path d="M1.5 1.5H26.5V26.5H1.5ZM1.5 18H9V26.5M12 16L21 7M14 7H21V14" /></Svg>,
  <Svg w={30} h={28} s={FG} sw={2.2} key="rect"><path d="M8 3H22M8 25H22M3 8V20M27 8V20" /><g fill={FG} stroke="none"><rect width="6" height="6" /><rect x="24" width="6" height="6" /><rect y="22" width="6" height="6" /><rect x="24" y="22" width="6" height="6" /></g></Svg>,
  <Svg w={32} h={32} s={FG} sw={2} key="xf"><circle cx="16" cy="16" r="12.5" strokeDasharray="16 4" /><path d="M16 6V26M6 16H26M13 9L16 6L19 9M13 23L16 26L19 23M9 13L6 16L9 19M23 13L26 16L23 19M1 31V26L6 31ZM31 1V6L26 1Z" /></Svg>,
];

function Scene() {
  return (
    <Panel $size={2546}>
      <TabBar>
        <Tab $w={154} $pl={16} $gap={10} $active><GridIcon w={21} />Scene</Tab>
        <TabTools $pr={23}><Kebab /></TabTools>
      </TabBar>
      <PanelToolbar $h={52} $plain>
        <Grip $ml={12} />
        <SceneButton $w={130} $ml={11} $gap={4}>
          <Svg w={28} h={29} s={FG} sw={2}><path d="M2 19V2H27V27H14M8 20L25 3" /><circle cx="7" cy="23" r="5" stroke="#ff6a3d" strokeWidth="2.5" /></Svg>
          Pivot<Down w={17} h={12} />
        </SceneButton>
        <SceneButton $w={133} $ml={6} $gap={4}>
          <Svg w={28} h={29} s={FG} sw={2}><path d="M14 1L26 8V17M14 1L2 8V21L14 28V15L2 8M14 15L26 8" /><circle cx="21" cy="23" r="5" stroke="#ff6a3d" strokeWidth="2.5" /></Svg>
          Local<Down w={17} h={12} />
        </SceneButton>
        <Grip $ml={18} />
        <SceneButton $w={44} $ml={11} $r="4px 0 0 4px">
          <Svg w={28} h={28} s={FG} sw={2.4}><path d="M7 0V25M13 0V10M21 0V8M1 5H25M1 13H14M1 20H12M14 12L20 20L26 12M20 20V28" /></Svg>
        </SceneButton>
        <SceneButton $w={28} $ml={2} $r="0 4px 4px 0"><Down w={17} h={11} /></SceneButton>
        <SceneButton $w={44} $ml={6} $r="4px 0 0 4px" $dim>
          <Svg w={28} h={28} s="#8a8a8a" sw={2.4}><path d="M7 0V25M13 0V10M21 0V8M1 5H25M1 13H10M1 20H8" /><path d="M14 16H20Q26 17 26 21Q26 26 20 26H14" stroke="#b65a40" strokeWidth="4" /></Svg>
        </SceneButton>
        <SceneButton $w={28} $ml={2} $r="0 4px 4px 0" $dim><Down w={17} h={11} c="#8a8a8a" /></SceneButton>
        <SceneButton $w={72} $ml={6} $gap={9}>
          <Svg w={26} h={28} s={FG} sw={2}><path d="M1 1V27M25 1V27M1 14H25M5 9V19M9 5V23M13 9V19M17 5V23M21 9V19" /></Svg>
          <Down w={17} h={11} />
        </SceneButton>
        <Grip $ml={1362} />
        <SceneButton $w={72} $ml={11} $gap={8}>
          <Svg w={28} h={28} s={FG} sw={2.2}><circle cx="14" cy="14" r="12.5" /><path d="M19 3A11 11 0 0 1 6 24Q18 29 25 17Q28 8 19 3Z" fill={FG} stroke="none" /></Svg>
          <Down w={17} h={11} />
        </SceneButton>
        <SceneButton $w={64} $ml={6} $bold>2D</SceneButton>
        <SceneButton $w={64} $ml={6} $on><Svg w={18} h={24} f="#eee"><path d="M5 16Q1 12 1 8Q2 0 9 0Q16 0 17 8Q17 12 13 16ZM5 18H13V21Q9 27 5 21Z" /></Svg></SceneButton>
        <SceneButton $w={64} $ml={6}><Svg w={22} h={20} f={FG}><path d="M0 5H4V13H0ZM6 5L13 0V11L11 16L6 13Z" /><path d="M13 11L21 19M21 11L13 19" stroke={FG} strokeWidth="2.2" /></Svg></SceneButton>
        <SceneButton $w={44} $ml={6} $r="4px 0 0 4px"><Svg w={26} h={24} f={FG}><path d="M18 0L20 6L26 8L20 10L18 16L16 10L10 8L16 6ZM1 12L8 9L13 14H20L12 18ZM2 17L12 22L24 16V18L12 24L2 19Z" /></Svg></SceneButton>
        <SceneButton $w={28} $ml={2} $r="0 4px 4px 0"><Down w={17} h={11} /></SceneButton>
        <SceneButton $w={64} $ml={6} $on><EyeOff /></SceneButton>
        <SceneButton $w={72} $ml={6} $gap={10}><Svg w={25} h={17} f="#b0b0b0"><rect width="17" height="17" rx="1" /><path d="M19 5L25 0V17L19 12Z" /></Svg><Down w={17} h={11} /></SceneButton>
        <SceneButton $w={44} $ml={6} $r="4px 0 0 4px" $on>
          <Svg w={30} h={30} s="#eee" sw={2.2}><circle cx="15" cy="16" r="12" /><path d="M15 3Q21 14 18 28M3 14Q12 22 27 16M15 3Q8 14 12 27" /><g fill="#eee" stroke="none"><circle cx="15" cy="4" r="3.5" /><circle cx="4" cy="14" r="3.5" /><circle cx="19" cy="19" r="3.5" /></g></Svg>
        </SceneButton>
        <SceneButton $w={28} $ml={2} $r="0 4px 4px 0" $on><Down w={17} h={11} /></SceneButton>
      </PanelToolbar>
      <SceneBody>
        <SceneDrawing />
        <OverlayGrip><HGrip /></OverlayGrip>
        <Palette>
          <HGrip />
          {PALETTE.map((icon, i) => (
            <PaletteButton key={i} $first={i === 0} $last={i === 5} $on={i === 1}>{icon}</PaletteButton>
          ))}
        </Palette>
      </SceneBody>
    </Panel>
  );
}

/* ---------- project ---------- */

const ProjectRow = ({ level, arrow, icon, bold, selected, children }) => (
  <TreeRow $pl={8 + 28 * level} $bold={bold} $selected={selected} $color={bold ? "#e0e0e0" : undefined}>
    <Slot $w={level ? 27 : 26}><Arrow kind={arrow} /></Slot>
    <Slot $w={level ? 32 : 35}>{icon}</Slot>
    <RowText $pb={4}>{children}</RowText>
  </TreeRow>
);

function Project() {
  return (
    <Panel $size={1150}>
      <TabBar>
        <Tab $w={175} $pl={15} $gap={10}><ConsoleIcon />Console</Tab>
        <Tab $w={160} $pl={14} $gap={7} $active><Folder w={25} h={20} />Project</Tab>
        <Tab $w={190} $pl={20} $gap={9}><DepthIcon />FlatDepth</Tab>
        <Tab $w={150} $pl={20} $gap={6}><GameIcon />Game</Tab>
        <Tab $w={165} $pl={20} $gap={6}><ProfilerIcon />Profiler</Tab>
        <Tab $w={260} $pl={20} $gap={8}><ChipIcon />Memory Profiler</Tab>
        <TabTools $pr={23} $gap={22}><Lock /><Kebab /></TabTools>
      </TabBar>
      <PanelToolbar $h={42} $pl={13}>
        <Plus />
        <Slot $w={2719} $pl={9}><Down w={14} h={11} /></Slot>
        <SearchField $w={635}>
          <Svg w={16} h={18} s={FG} sw={2.2}><circle cx="6" cy="6" r="4.5" /><path d="M9 10L14 16" strokeWidth="3" /></Svg>
          <SearchOpen><OpenWindow /></SearchOpen>
        </SearchField>
        <Slot $w={5} />
        <FilterCell $w={52}><Svg w={24} h={27} f={FG}><rect x="3" width="11" height="11" /><path d="M18 6L24 18H16Q16 12 15 11Z" /><circle cx="7.5" cy="19.5" r="7" /></Svg></FilterCell>
        <FilterCell $w={53}><Svg w={21} h={21} f={FG}><path fillRule="evenodd" d="M9 1L19 0L21 2L20 10L9 21L0 12ZM15 4A2 2 0 1 0 17 6A2 2 0 0 0 15 4Z" /></Svg></FilterCell>
        <FilterCell $w={53}><Svg w={27} h={27} f={FG}><path d="M8 0H19L27 8V19L19 27H8L0 19V8Z" /><path d="M12 4H15.5L15 16H12.5ZM12 19H15.5V22.5H12Z" fill="#333" /></Svg></FilterCell>
        <FilterCell $w={52}><Star w={24} c="#8a8a8a" /></FilterCell>
        <FilterCell $w={85}><EyeOff c={FG} />44</FilterCell>
      </PanelToolbar>
      <ProjectBody>
        <ProjectTree>
          <ProjectRow level={0} arrow="d" icon={<Star />} bold>Favorites</ProjectRow>
          {["All Materials", "All Models", "All Prefabs"].map((t) => (
            <ProjectRow key={t} level={1} icon={<Search w={25} />}>{t}</ProjectRow>
          ))}
          <TreeGap />
          <ProjectRow level={0} arrow="d" icon={<FolderOpen />} bold>Assets</ProjectRow>
          {ASSETS.map(([name, level, arrow], i) => (
            <ProjectRow key={i} level={level} arrow={arrow} selected={name === "Components"} icon={arrow === "d" ? <FolderOpen /> : <Folder />}>
              {name}
            </ProjectRow>
          ))}
        </ProjectTree>
        <ScrollTrack $w={27}>
          <Up />
          <ScrollThumb $h={824} $mt={10} />
          <Grow />
          <Down w={14} h={10} />
        </ScrollTrack>
        <ProjectContent>
          <Breadcrumb>
            <Slot $w={88}>Assets</Slot>
            <Slot $w={22}><Chevron /></Slot>
            <Crumb>Components</Crumb>
          </Breadcrumb>
          <FolderGrid>
            {FOLDERS.map((f) => (
              <FolderTile key={f}><BigFolder /><RowText>{f}</RowText></FolderTile>
            ))}
          </FolderGrid>
          <ProjectFooter><ZoomTrack><Knob /></ZoomTrack></ProjectFooter>
        </ProjectContent>
      </ProjectBody>
    </Panel>
  );
}

/* ---------- inspector ---------- */

const Header = ({ icon, check, children }) => (
  <ComponentHeader>
    <Slot $w={28}><Fold /></Slot>
    <Slot $w={37}>{icon}</Slot>
    <Slot $w={41}>{check && <CheckBox><Tick /></CheckBox>}</Slot>
    <ComponentTitle>{children}</ComponentTitle>
    <HeaderTools>
      <Slot $w={40}><HelpDot /></Slot>
      <Slot $w={48}><Sliders /></Slot>
      <Kebab />
    </HeaderTools>
  </ComponentHeader>
);

const Prop = ({ label, pl, bright, short, children }) => (
  <Row><Label $pl={pl} $bright={bright} $short={short}>{label}</Label>{children}</Row>
);
const Obj = ({ icon, w, children }) => (
  <ObjectField $w={w}>{icon}{children}<Picker><Target /></Picker></ObjectField>
);
const Check = ({ ml }) => <CheckBox $ml={ml}><Tick /></CheckBox>;
const Color = ({ c, a = 100, flat }) => (
  <ColorField>
    <Swatch $c={c}>{!flat && <AlphaBar $a={a} />}</Swatch>
    <Picker><Dropper /></Picker>
  </ColorField>
);
const Pair = ({ label, pl, x, y }) => (
  <Row>
    <Label $pl={pl} $short={5}>{label}</Label>
    <Axis $w={22}>X</Axis><Field $w={216}>{x}</Field>
    <Axis $w={29} $pl={7}>Y</Axis><Field $w={215}>{y}</Field>
  </Row>
);
const Triple = ({ label, icon, values }) => (
  <Row>
    <Label><Slot $w={444}>{label}</Slot>{icon}</Label>
    <Axis $w={30} $pl={2}>X</Axis><Field $w={203}>{values[0]}</Field>
    <Axis $w={41} $pl={13}>Y</Axis><Field $w={203}>{values[1]}</Field>
    <Axis $w={39} $pl={11}>Z</Axis><Field $w={204}>{values[2]}</Field>
  </Row>
);

function RectTransform() {
  return (
    <>
      <Header icon={<RectIcon />}>Rect Transform</Header>
      <Spacer $h={13} />
      <RectBlock>
        <AnchorPreview>
          <Svg w={150} h={112}>
            <text x="73" y="18" textAnchor="middle" fontFamily="Inter, sans-serif" fontSize="20" fill={FG}>left</text>
            <text x="0" y="0" transform="translate(21 72) rotate(-90)" textAnchor="middle" fontFamily="Inter, sans-serif" fontSize="19" fill={FG}>middle</text>
            <rect x="39" y="38" width="68" height="68" stroke="#6e6e6e" strokeWidth="2" />
            <path d="M39 38V106M39 72H107" stroke="#c24a4a" strokeWidth="2" />
            <rect x="57" y="55.5" width="32" height="33" stroke="#a8a8a8" strokeWidth="2" />
            <rect x="36" y="69" width="6" height="6" fill="#d9a300" />
          </Svg>
        </AnchorPreview>
        <RectGrid>
          <RectLabel>Pos X</RectLabel><RectLabel>Pos Y</RectLabel><RectLabel>Pos Z</RectLabel>
          <Field $w={238}>0</Field><Field $w={238}>7</Field><Field $w={238}>0</Field>
          <RectLabel>Width</RectLabel><RectLabel>Height</RectLabel><span />
          <Field $w={238}>300</Field><Field $w={238}>60</Field>
          <SmallButtons>
            <SmallButton $w={46} $r="6px 0 0 6px"><Svg w={20} h={20} s="#9a9a9a" sw={2}><path d="M1 1H19V19H1Z" strokeDasharray="4 3" /></Svg></SmallButton>
            <SmallButton $w={53} $r="0 6px 6px 0">R</SmallButton>
          </SmallButtons>
        </RectGrid>
      </RectBlock>
      <Row $h={37}><Label $pl={14} $pt={7}><Slot $w={24}><Fold /></Slot>Anchors</Label></Row>
      <Pair label="Min" pl={68} x="0" y="0.5" />
      <Pair label="Max" pl={68} x="0" y="0.5" />
      <Spacer $h={4} />
      <Pair label="Pivot" x="1" y="0.5" />
      <Spacer $h={16} />
      <Triple label="Rotation" values={["0", "0", "0"]} />
      <Triple
        label="Scale"
        icon={<Svg w={26} h={22} s={FG} sw={2.2}><path d="M11 4H7Q2 5 2 11Q2 17 7 18H10M16 4H19Q24 5 24 11Q24 17 19 18H15M8 11H18M5 1L21 21" /></Svg>}
        values={["0.09999999", "0.09999999", "0.09999999"]}
      />
      <Spacer $h={16} />
    </>
  );
}

function Inspector() {
  return (
    <Panel $size={1280}>
      <TabBar>
        <Tab $w={186} $pl={17} $gap={9} $active><InfoDot />Inspector</Tab>
        <Tab $w={200} $pl={20} $gap={9}><InfoDot />Inspector</Tab>
        <TabTools $pr={25} $gap={22}><Lock /><Kebab /></TabTools>
      </TabBar>
      <InspectorScroll>
        <InspectorContent>
          <ObjectHeader>
            <TopSlot $w={79}>
              <Svg w={54} h={56} f="#7fd6fd">
                <path d="M20 4L39 14L20 24L1 14ZM0 17L19 27V46L0 36ZM40 17L21 27V46L40 36Z" /><path d="M38 45H52L45 53Z" fill={FG} />
              </Svg>
            </TopSlot>
            <ObjectLines>
              <HeaderLine>
                <Check />
                <Field $w={960} $ml={12} $bold>Dropdown</Field>
                <CheckBox $ml={6} />
                <Slot $w={99} $pl={8}>Static</Slot>
                <Down w={15} h={11} />
              </HeaderLine>
              <HeaderLine $ml={-13}>
                <Axis $w={40}>Tag</Axis>
                <Select $w={514} $ml={13}>Untagged<Down w={15} h={11} /></Select>
                <Axis $w={73} $ml={28}>Layer</Axis>
                <Select $w={495}>Default<Down w={15} h={11} /></Select>
              </HeaderLine>
            </ObjectLines>
          </ObjectHeader>
          <RectTransform />
          <Header icon={<EyeIcon />}>Canvas Renderer</Header>
          <Spacer $h={8} />
          <Prop label="Cull Transparent Mesh"><Check /></Prop>
          <Spacer $h={16} />

          <Header icon={<ImageIcon />} check>Image</Header>
          <Spacer $h={7} />
          <Prop label="Source Image"><Obj icon={<SpriteIcon />}>Round Radius 4</Obj></Prop>
          <Prop label="Color"><Color c="#fff" flat /></Prop>
          <Prop label="Material"><Obj>None (Material)</Obj></Prop>
          <Prop label="Raycast Target"><Check /></Prop>
          <Prop label={<><Slot $w={24}><Right /></Slot>Raycast Padding</>} pl={14} bright />
          <Spacer $h={4} />
          <Prop label="Maskable"><Check /></Prop>
          <Prop label="Image Type" pl={45}><Select $w={708} $ml={5}>Sliced<Down w={15} h={11} /></Select></Prop>
          <Prop label="Fill Center" pl={74}><Check ml={6} /></Prop>
          <Prop label="Pixels Per Unit Multiplier" pl={74}><Field $w={708} $ml={5}>4</Field></Prop>
          <Spacer $h={16} />

          <Header icon={<Svg w={28} h={20} f={FG}><rect width="28" height="20" rx="2" /><path d="M15 6H25L20 14Z" fill="#333" /></Svg>} check>Dropdown</Header>
          <Spacer $h={7} />
          <Prop label="Interactable"><Check /></Prop>
          <Prop label="Transition"><Select>Color Tint<Down w={15} h={11} /></Select></Prop>
          <Prop label="Target Graphic" pl={68}><Obj icon={<ImageIcon w={22} />}>Dropdown (Image)</Obj></Prop>
          <Prop label="Normal Color" pl={68}><Color c="#2196f3" /></Prop>
          <Prop label="Highlighted Color" pl={68}><Color c="#1a70b7" /></Prop>
          <Prop label="Pressed Color" pl={68}><Color c="#5aaff6" /></Prop>
          <Prop label="Selected Color" pl={68}><Color c="#2196f3" /></Prop>
          <Prop label="Disabled Color" pl={68}><Color c="#c8c8c8" a={50.2} /></Prop>
          <Prop label="Color Multiplier" pl={68}>
            <SliderTrack><Knob /></SliderTrack><Field $w={99} $ml={9}>1</Field>
          </Prop>
          <Prop label="Fade Duration" pl={68}><Field>0.1</Field></Prop>
          <Spacer $h={16} />
          <Prop label="Navigation"><Select>None<Down w={15} h={11} /></Select></Prop>
          <Prop label="" short={5}><PushButton $w={725}>Visualize</PushButton></Prop>
          <Spacer $h={16} />
          <Prop label="Template"><Obj icon={<RectIcon w={21} />}>Template (Rect Transform)</Obj></Prop>
          <Prop label="Caption Text"><Obj icon={<TextIcon />}>Label (Text)</Obj></Prop>
          <Prop label="Caption Image"><Obj>None (Image)</Obj></Prop>
          <Spacer $h={16} />
          <Prop label="Item Text"><Obj icon={<TextIcon />}>Item Label (Text)</Obj></Prop>
          <Prop label="Item Image"><Obj>None (Image)</Obj></Prop>
          <Spacer $h={16} />
          <Prop label="Value"><Field>0</Field></Prop>
          <Prop label="Alpha Fade Speed"><Field>0.15</Field></Prop>
          <Spacer $h={18} />
          <ListBox $h={134}>
            <ListHeader>Options</ListHeader>
            <ListBody $pad="10px 0 0 9px">
              <TopSlot $w={32} $pt={14}>
                <Svg w={20} h={9} s="#6a6a6a" sw={2}><path d="M0 1H20M0 8H20" /></Svg>
              </TopSlot>
              <ListFields>
                <Field $w={1152}>None</Field>
                <Obj w={1152}>None (Sprite)</Obj>
              </ListFields>
            </ListBody>
          </ListBox>
          <ListFooter>
            <Plus w={20} sw={3.5} />
            <Svg w={18} h={4} f={FG}><rect width="18" height="4" rx="1" /></Svg>
          </ListFooter>
          <Spacer $h={22} />
          <ListBox $h={150}>
            <ListHeader>On Value Changed (Int32)</ListHeader>
            <ListBody $pad="44px 0 0 14px">List is Empty</ListBody>
          </ListBox>
          <ListFooter>
            <Plus w={20} sw={3.5} />
            <Svg w={18} h={4} f="#7a7a7a"><rect width="18" height="4" rx="1" /></Svg>
          </ListFooter>
          <Spacer $h={18} />
          <MaterialHeader>
            <BottomSlot $w={18}><Right /></BottomSlot>
            <Thumb />
            <MaterialLines>
              <Row $h={30}>
                <MaterialTitle>Default UI Material (Material)</MaterialTitle>
                <Slot $w={42}><HelpDot /></Slot>
                <Kebab />
              </Row>
              <Row $h={62}>
                <Axis $w={103} $dim>Shader</Axis>
                <Select $w={847} $dim>UI/Default<Down w={15} h={11} c="#7c7c7c" /></Select>
                <PushButton $w={85} $ml={9}>Edit...</PushButton>
                <PushButton $w={86} $ml={9}><HierarchyIcon /><Down w={15} h={11} /></PushButton>
              </Row>
            </MaterialLines>
          </MaterialHeader>
        </InspectorContent>
        <ScrollTrack $w={25}>
          <Up />
          <ScrollThumb $h={2332} $mt={12} />
          <Grow />
          <Down w={14} h={10} />
        </ScrollTrack>
      </InspectorScroll>
      <PreviewBar>
        <PreviewName>Dropdown<Down w={15} h={11} /></PreviewName>
        <PreviewRule />
        <Slot $w={20} />
        <Kebab />
      </PreviewBar>
    </Panel>
  );
}

/* ---------- app ---------- */

export default function App() {
  return (
    <>
      <GlobalStyle />
      <Desktop>
        <Window>
          <TitleBar>
            <Title>Unity - unity_ros_teleoperation - LidarTester - Android - Unity 2022.3.12f1 &lt;Vulkan&gt;</Title>
            <WindowButtons>
              <MinimizeSlot><Svg w={16} h={14} f="#eee"><rect y="10" width="16" height="3" /></Svg></MinimizeSlot>
              <Svg w={18} h={18} s="#eee" sw={2}><path d="M2 5H12V16H2Z" /><path d="M6 1H17V13" stroke="#9a9a9a" /></Svg>
              <CloseButton><Svg w={16} h={16} s="#fff" sw={2.4}><path d="M1 1L15 15M15 1L1 15" /></Svg></CloseButton>
            </WindowButtons>
          </TitleBar>
          <MenuBar>
            {MENU.map(([t, w]) => <MenuItem key={t} $w={w}>{t}</MenuItem>)}
          </MenuBar>
          <AppToolbar>
            <ToolButton $w={129} $gap={16}><UserIcon />MW<Down w={14} h={12} /></ToolButton>
            <ToolButton $w={62} $ml={8}><CloudIcon /></ToolButton>
            <ToolButton $w={60} $ml={8} $h={40}><HexIcon /></ToolButton>
            <ToolButton $w={62} $ml={2113} $h={36} $r="4px 0 0 4px"><Svg w={16} h={20} f={FG}><path d="M0 0L16 10L0 20Z" /></Svg></ToolButton>
            <ToolButton $w={63} $ml={1} $h={36} $r="0"><Svg w={16} h={20} f={FG}><rect width="6" height="20" rx="2" /><rect x="10" width="6" height="20" rx="2" /></Svg></ToolButton>
            <ToolButton $w={61} $ml={1} $h={36} $r="0 4px 4px 0" $bg="#282828"><Svg w={20} h={20} f="#9c9c9c"><path d="M0 0L14 10L0 20Z" /><rect x="16" width="4" height="20" rx="2" /></Svg></ToolButton>
            <ToolButton $w={62} $ml={1493}><HistoryIcon /></ToolButton>
            <ExperimentalButton $w={405} $h={40} $ml={11} $gap={7}>Experimental Packages In Use<Down w={19} h={13} c="#e0a800" /></ExperimentalButton>
            <ToolButton $w={62} $ml={11}><Search w={24} /></ToolButton>
            <ToolButton $w={159} $ml={7} $px={7} $justify="space-between">Layers<Down w={15} h={11} /></ToolButton>
            <ToolButton $w={158} $ml={8} $px={7} $justify="space-between">Layout<Down w={15} h={11} /></ToolButton>
          </AppToolbar>
          <Main>
            <LeftColumn>
              <TopPanels>
                <Hierarchy />
                <Scene />
              </TopPanels>
              <Project />
            </LeftColumn>
            <Inspector />
          </Main>
          <StatusBar>
            <Slot $w={35}>
              <Svg w={27} h={27} f="#ffc107"><path d="M13.5 0Q15 0 16 2L27 25Q27 27 25 27H2Q0 27 0 25L11 2Q12 0 13.5 0Z" /><path d="M12 8H15L14.5 18H12.5ZM12 20H15V23H12Z" fill="#191919" /></Svg>
            </Slot>
            More than one message was registered as "std_srvs/Trigger" "Response"
            <Grow />
            <StatusCell><Svg w={30} h={30} s={FG} sw={2.4}><ellipse cx="15" cy="17" rx="7" ry="10" fill={FG} /><path d="M2 10L9 14M2 18H9M3 27L9 22M28 10L21 14M28 18H21M27 27L21 22M11 6Q15 1 19 6" /><path d="M3 2L28 29" stroke="#191919" strokeWidth="5" /><path d="M2 1L28 29" /></Svg></StatusCell>
            <StatusCell><Svg w={28} h={28} f={FG}><ellipse cx="14" cy="5" rx="12" ry="5" /><path d="M2 8Q14 15 26 8V13Q14 20 2 13ZM2 16Q14 23 26 16V22Q14 30 2 22Z" /><path d="M2 4L27 27" stroke="#191919" strokeWidth="5" /><path d="M1 3L26 27" stroke={FG} strokeWidth="2.4" /></Svg></StatusCell>
            <StatusCell><Svg w={28} h={28} s={FG} sw={2.4}><path d="M8 3A13 13 0 0 0 8 25M20 3A13 13 0 0 1 20 25M2 2L7 3V8M26 26L21 25V20" /><path d="M10 16Q7 7 14 6Q21 7 18 16V21H10Z" fill={FG} stroke="none" /><path d="M3 2L26 27" stroke="#191919" strokeWidth="5" /><path d="M2 2L26 27" /></Svg></StatusCell>
            <StatusCell><Svg w={28} h={28} s={FG} sw={2.4}><circle cx="14" cy="14" r="12.5" /><path d="M8 14L12.5 19L20 10" /></Svg></StatusCell>
          </StatusBar>
        </Window>
        <Annotation $x={394} $y={779}>1. Hierarchy</Annotation>
        <Annotation $x={2631} $y={829}>2. Scene</Annotation>
        <Annotation $x={4108} $y={828}>3. Inspector</Annotation>
        <Annotation $x={1852} $y={2136}>4. Project Assets</Annotation>
      </Desktop>
    </>
  );
}
